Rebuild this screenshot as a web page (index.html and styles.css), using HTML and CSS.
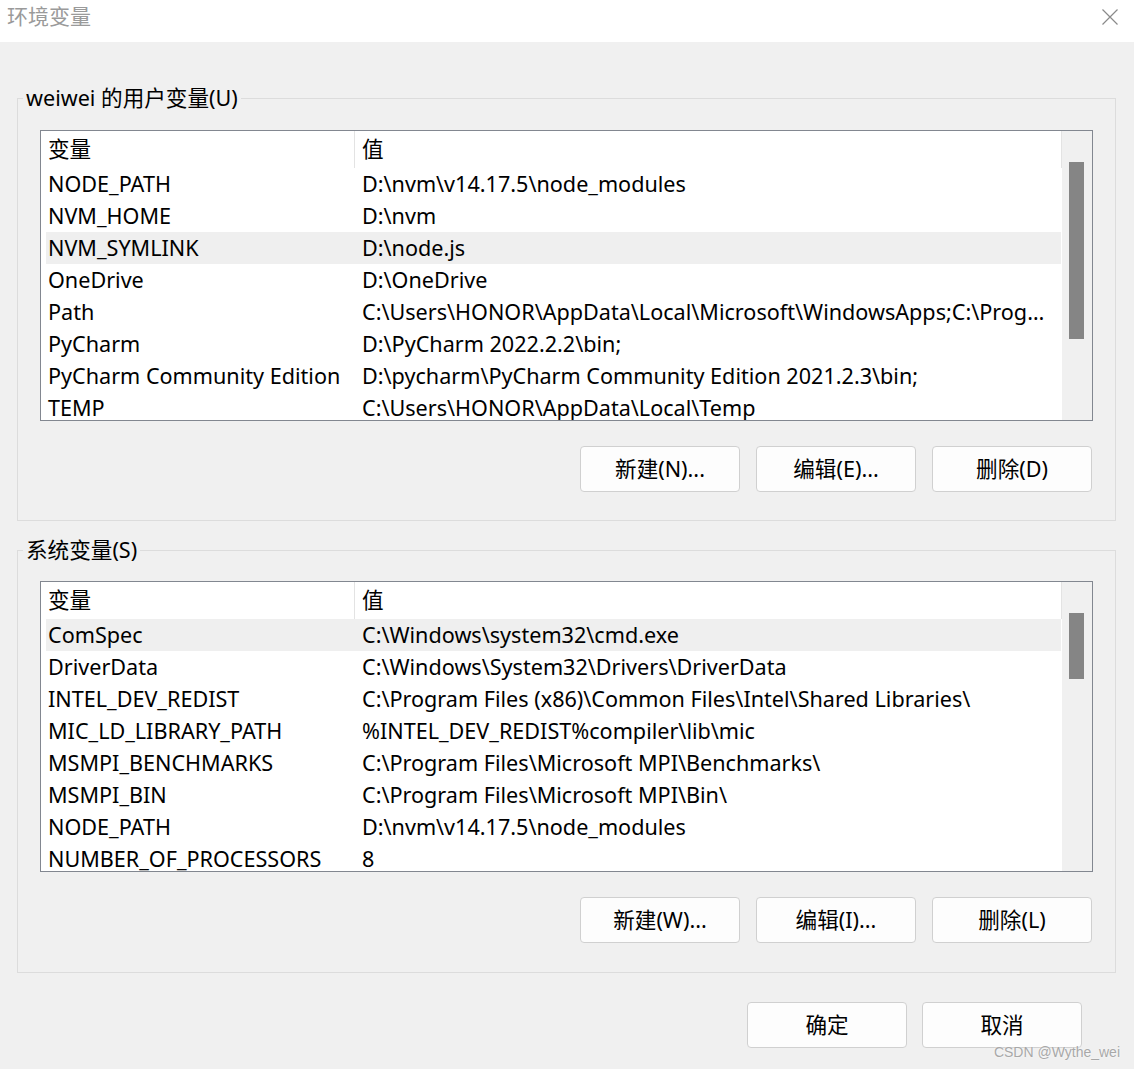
FILE: index.html
```html
<!DOCTYPE html>
<html lang="zh-CN">
<head>
<meta charset="utf-8">
<title>环境变量</title>
<link rel="stylesheet" href="styles.css">
</head>
<body>
<div class="window">
  <header class="titlebar">
    <span class="title">环境变量</span>
    <button class="close" aria-label="关闭">
      <svg width="16" height="16" viewBox="0 0 16 16"><path d="M0.5 0.5 L15.5 15.5 M15.5 0.5 L0.5 15.5" stroke="#8a8a8a" stroke-width="1.2" fill="none"/></svg>
    </button>
  </header>

  <main class="content">
    <fieldset class="group">
      <legend>weiwei 的用户变量(U)</legend>
      <div class="list">
        <div class="list-body">
          <div class="row head"><div class="c1">变量</div><div class="c2">值</div></div>
          <div class="row"><div class="c1">NODE_PATH</div><div class="c2">D:\nvm\v14.17.5\node_modules</div></div>
          <div class="row"><div class="c1">NVM_HOME</div><div class="c2">D:\nvm</div></div>
          <div class="row sel"><div class="c1">NVM_SYMLINK</div><div class="c2">D:\node.js</div></div>
          <div class="row"><div class="c1">OneDrive</div><div class="c2">D:\OneDrive</div></div>
          <div class="row"><div class="c1">Path</div><div class="c2">C:\Users\HONOR\AppData\Local\Microsoft\WindowsApps;C:\Prog…</div></div>
          <div class="row"><div class="c1">PyCharm</div><div class="c2">D:\PyCharm 2022.2.2\bin;</div></div>
          <div class="row"><div class="c1">PyCharm Community Edition</div><div class="c2">D:\pycharm\PyCharm Community Edition 2021.2.3\bin;</div></div>
          <div class="row"><div class="c1">TEMP</div><div class="c2">C:\Users\HONOR\AppData\Local\Temp</div></div>
        </div>
        <div class="scrollbar"><div class="thumb thumb-user"></div></div>
      </div>
      <div class="actions">
        <button class="btn">新建(N)...</button>
        <button class="btn">编辑(E)...</button>
        <button class="btn">删除(D)</button>
      </div>
    </fieldset>

    <fieldset class="group group-sys">
      <legend>系统变量(S)</legend>
      <div class="list">
        <div class="list-body">
          <div class="row head"><div class="c1">变量</div><div class="c2">值</div></div>
          <div class="row sel"><div class="c1">ComSpec</div><div class="c2">C:\Windows\system32\cmd.exe</div></div>
          <div class="row"><div class="c1">DriverData</div><div class="c2">C:\Windows\System32\Drivers\DriverData</div></div>
          <div class="row"><div class="c1">INTEL_DEV_REDIST</div><div class="c2">C:\Program Files (x86)\Common Files\Intel\Shared Libraries\</div></div>
          <div class="row"><div class="c1">MIC_LD_LIBRARY_PATH</div><div class="c2">%INTEL_DEV_REDIST%compiler\lib\mic</div></div>
          <div class="row"><div class="c1">MSMPI_BENCHMARKS</div><div class="c2">C:\Program Files\Microsoft MPI\Benchmarks\</div></div>
          <div class="row"><div class="c1">MSMPI_BIN</div><div class="c2">C:\Program Files\Microsoft MPI\Bin\</div></div>
          <div class="row"><div class="c1">NODE_PATH</div><div class="c2">D:\nvm\v14.17.5\node_modules</div></div>
          <div class="row"><div class="c1">NUMBER_OF_PROCESSORS</div><div class="c2">8</div></div>
        </div>
        <div class="scrollbar"><div class="thumb thumb-sys"></div></div>
      </div>
      <div class="actions">
        <button class="btn">新建(W)...</button>
        <button class="btn">编辑(I)...</button>
        <button class="btn">删除(L)</button>
      </div>
    </fieldset>

    <div class="footer">
      <button class="btn">确定</button>
      <button class="btn">取消</button>
    </div>
  </main>
  <div class="watermark">CSDN @Wythe_wei</div>
</div>
</body>
</html>
```

FILE: styles.css
```css
* { box-sizing: border-box; }
html, body {
  margin: 0;
  padding: 0;
  background: #f0f0f0;
}
body {
  font-family: "Noto Sans", "Noto Sans CJK SC", sans-serif;
  font-size: 21.6px;
  color: #000;
}
.window {
  position: relative;
  width: 1134px;
  height: 1069px;
  overflow: hidden;
  background: #f0f0f0;
}
.titlebar {
  height: 42px;
  background: #fff;
  display: flex;
  align-items: center;
  justify-content: space-between;
  padding: 0 16px 0 7px;
}
.title {
  color: #9a9a9a;
  font-family: "Noto Sans CJK SC", sans-serif;
  font-size: 21px;
  line-height: 28px;
  margin-top: -12px;
}
.close {
  border: 0;
  background: transparent;
  padding: 0;
  width: 16px;
  height: 16px;
  margin-top: -8px;
  display: block;
}
.close svg { display: block; }
.content {
  padding: 42px 0 0 17px;
}
.group {
  margin: 0;
  width: 1099px;
  border: 1px solid #dcdcdc;
  padding: 0 22px 28px 22px;
}
.group-sys {
  margin-top: 15px;
  padding-bottom: 29px;
}
.group legend {
  margin-left: -17px;
  padding: 0 3px;
  line-height: 28px;
  font-family: "Noto Sans", "Noto Sans CJK SC", sans-serif;
}
.list {
  margin-top: 18px;
  height: 291px;
  border: 1px solid #828790;
  background: #fff;
  display: flex;
}
.group-sys .list { margin-top: 17px; }
.list-body {
  flex: 1;
  overflow: hidden;
  padding-left: 5px;
}
.row {
  display: flex;
  height: 32px;
  line-height: 32px;
  white-space: nowrap;
}
.row.head {
  height: 37px;
  line-height: 36px;
}
.row.head .c1, .row.head .c2 { border-right: 1px solid #e3e3e3; }
.row.sel { background: #efefef; margin-right: 1px; }
.c1 {
  width: 309px;
  flex: none;
  padding-left: 2px;
  overflow: hidden;
}
.c2 {
  flex: 1;
  padding-left: 7px;
  overflow: hidden;
}
.scrollbar {
  width: 30px;
  flex: none;
  background: #f0f0f0;
  padding: 31px 0 0 7px;
}
.thumb {
  width: 15px;
  background: #858585;
}
.thumb-user { height: 177px; }
.thumb-sys { height: 66px; }
.actions {
  display: flex;
  justify-content: flex-end;
  gap: 16px;
  margin-top: 25px;
  padding-right: 1px;
}
.btn {
  width: 160px;
  height: 46px;
  border: 1px solid #d0d0d0;
  border-radius: 4px;
  background: #fdfdfd;
  font-family: "Noto Sans", "Noto Sans CJK SC", sans-serif;
  font-size: 21.6px;
  color: #000;
  padding: 0 0 3px 0;
}
.footer {
  display: flex;
  justify-content: flex-end;
  gap: 15px;
  margin-top: 29px;
  padding-right: 52px;
}
.watermark {
  position: absolute;
  right: 14px;
  bottom: 9px;
  font-family: "Liberation Sans", Arial, sans-serif;
  font-size: 14px;
  color: #a8a8a8;
  text-shadow: 0 0 2px #fff;
}
```
